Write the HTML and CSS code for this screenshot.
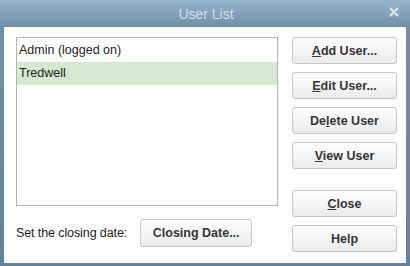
FILE: index.html
```html
<!DOCTYPE html>
<html>
  <head>
    <meta name="viewport" content="width=device-width, initial-scale=1.0">
    <title>User List</title>
    <link rel="stylesheet" href="styles.css">
  </head>
  <body>
    <div class="window">
      <div class="title-bar">
        <p class="title">User List</p>
        <svg class="close-x" width="10" height="10" viewBox="0 0 10 10">
          <path d="M1.7 1.7 L8.3 8.3 M8.3 1.7 L1.7 8.3" stroke="#d9e1e8" stroke-width="2.4" stroke-linecap="round"></path>
        </svg>
      </div>
      <div class="content">
        <div class="left-col">
          <div class="user-list">
            <div class="user-row">Admin (logged on)</div>
            <div class="user-row selected">Tredwell</div>
          </div>
          <div class="closing-row">
            <span class="closing-label">Set the closing date:</span>
            <button class="btn closing-btn">Closing Date...</button>
          </div>
        </div>
        <div class="right-col">
          <button class="btn"><u>A</u>dd User...</button>
          <button class="btn"><u>E</u>dit User...</button>
          <button class="btn">De<u>l</u>ete User</button>
          <button class="btn"><u>V</u>iew User</button>
          <button class="btn close-btn"><u>C</u>lose</button>
          <button class="btn">Help</button>
        </div>
      </div>
    </div>
  </body>
</html>
```
FILE: styles.css
```css
body {
  margin: 0;
  font-family: "Liberation Sans", Arial, sans-serif;
}
.window {
  width: 410px;
  height: 266px;
  box-sizing: border-box;
  display: flex;
  flex-direction: column;
  background: linear-gradient(#97b5cc, #708ea7 27px, #64829b);
}
.title-bar {
  height: 27px;
  position: relative;
  display: flex;
  align-items: center;
  justify-content: center;
}
.title {
  margin: 0;
  font-size: 14px;
  color: #d6dfe7;
  padding-left: 2px;
}
.close-x {
  position: absolute;
  right: 11px;
  top: 7px;
}
.content {
  flex: 1;
  margin: 0 4px 3px 4px;
  background-color: #fff;
  display: flex;
  padding: 10px 0 0 12px;
  gap: 14px;
}
.left-col {
  display: flex;
  flex-direction: column;
}
.user-list {
  width: 262px;
  height: 169px;
  box-sizing: border-box;
  border: 1px solid #b4b4b4;
}
.user-row {
  height: 24px;
  line-height: 24px;
  padding-left: 2px;
  font-size: 12.5px;
  color: #222;
}
.user-row.selected {
  height: 23px;
  line-height: 23px;
  background-color: #d4e9d0;
}
.closing-row {
  display: flex;
  align-items: center;
  margin-top: 13px;
  gap: 13px;
}
.closing-label {
  font-size: 12.5px;
  color: #222;
  letter-spacing: -0.1px;
}
.btn {
  width: 105px;
  height: 27px;
  padding: 0;
  font-family: "Liberation Sans", Arial, sans-serif;
  font-weight: bold;
  font-size: 12.5px;
  color: #363636;
  background: linear-gradient(#fefefe, #ebebeb);
  border: 1px solid #c6c6c6;
  border-radius: 3px;
}
.btn u {
  text-underline-offset: 1px;
}
.closing-btn {
  width: 112px;
  height: 28px;
}
.right-col {
  display: flex;
  flex-direction: column;
  gap: 8px;
}
.close-btn {
  margin-top: 13px;
}
```
